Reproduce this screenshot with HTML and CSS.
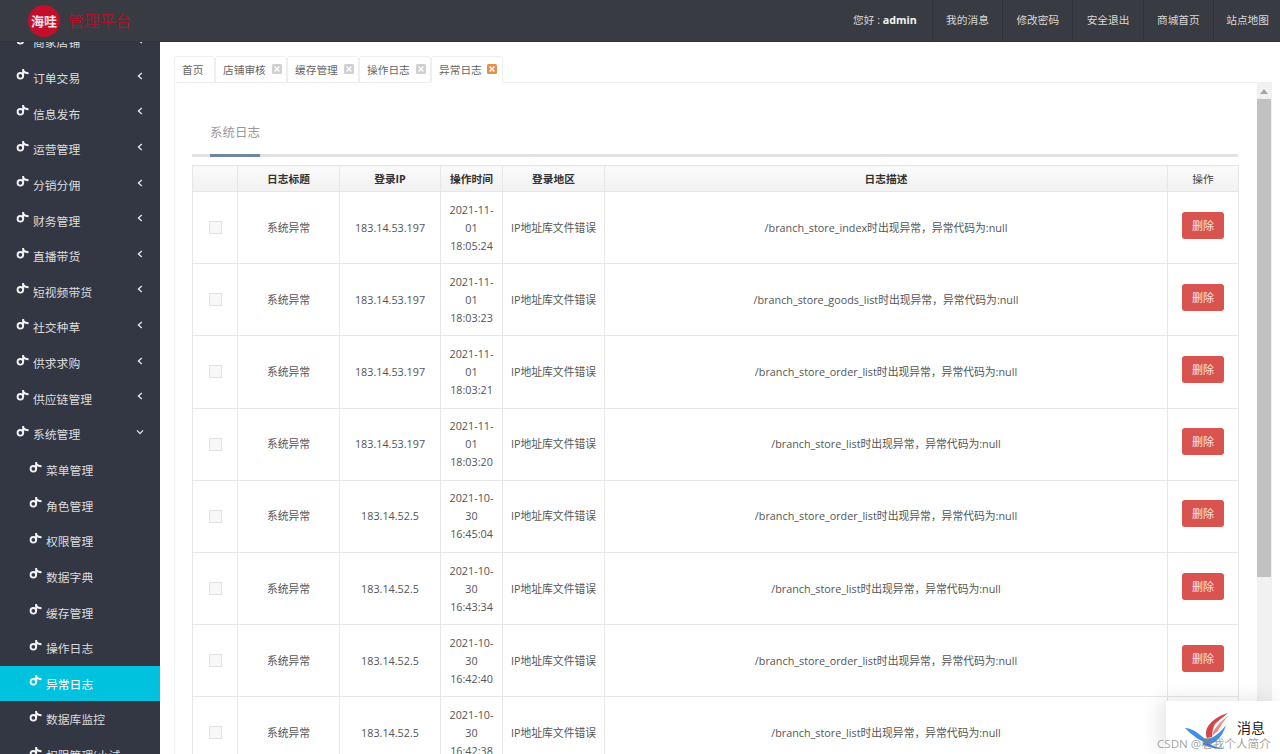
FILE: index.html
```html
<!DOCTYPE html>
<html lang="zh">
<head>
<meta charset="utf-8">
<title>管理平台</title>
<link rel="stylesheet" href="styles.css">
</head>
<body>
<svg class="defs" width="0" height="0">
  <symbol id="ico" viewBox="0 0 14 14">
    <circle cx="4.7" cy="8.4" r="3" fill="none" stroke="currentColor" stroke-width="2"/>
    <path d="M7.7 1V8.4M7.7 3C9 5 11 5.6 13.5 5.6" fill="none" stroke="currentColor" stroke-width="2.1"/>
  </symbol>
  <symbol id="left" viewBox="0 0 8 8"><path d="M5.8 1L2.4 4l3.4 3" fill="none" stroke="currentColor" stroke-width="1.3"/></symbol>
  <symbol id="down" viewBox="0 0 8 8"><path d="M1 2.4L4 5.6l3-3.2" fill="none" stroke="currentColor" stroke-width="1.3"/></symbol>
  <symbol id="close" viewBox="0 0 10 10"><rect width="10" height="10" rx="1.5" fill="currentColor"/><path d="M2.6 2.6l4.8 4.8M7.4 2.6L2.6 7.4" stroke="#fff" stroke-width="1.4"/></symbol>
</svg>

<header class="top">
  <div class="brand">
    <span class="badge">海哇</span>
    <span class="brand-name">管理平台</span>
  </div>
  <nav class="top-nav">
    <a class="top-link hello">您好 : <b>admin</b></a>
    <a class="top-link">我的消息</a>
    <a class="top-link">修改密码</a>
    <a class="top-link">安全退出</a>
    <a class="top-link">商城首页</a>
    <a class="top-link last">站点地图</a>
  </nav>
</header>

<div class="frame">
  <aside class="side">
    <ul class="menu">
      <li class="item"><svg class="ico"><use href="#ico"/></svg><span>商家店铺</span><svg class="arrow"><use href="#left"/></svg></li>
      <li class="item"><svg class="ico"><use href="#ico"/></svg><span>订单交易</span><svg class="arrow"><use href="#left"/></svg></li>
      <li class="item"><svg class="ico"><use href="#ico"/></svg><span>信息发布</span><svg class="arrow"><use href="#left"/></svg></li>
      <li class="item"><svg class="ico"><use href="#ico"/></svg><span>运营管理</span><svg class="arrow"><use href="#left"/></svg></li>
      <li class="item"><svg class="ico"><use href="#ico"/></svg><span>分销分佣</span><svg class="arrow"><use href="#left"/></svg></li>
      <li class="item"><svg class="ico"><use href="#ico"/></svg><span>财务管理</span><svg class="arrow"><use href="#left"/></svg></li>
      <li class="item"><svg class="ico"><use href="#ico"/></svg><span>直播带货</span><svg class="arrow"><use href="#left"/></svg></li>
      <li class="item"><svg class="ico"><use href="#ico"/></svg><span>短视频带货</span><svg class="arrow"><use href="#left"/></svg></li>
      <li class="item"><svg class="ico"><use href="#ico"/></svg><span>社交种草</span><svg class="arrow"><use href="#left"/></svg></li>
      <li class="item"><svg class="ico"><use href="#ico"/></svg><span>供求求购</span><svg class="arrow"><use href="#left"/></svg></li>
      <li class="item"><svg class="ico"><use href="#ico"/></svg><span>供应链管理</span><svg class="arrow"><use href="#left"/></svg></li>
      <li class="item"><svg class="ico"><use href="#ico"/></svg><span>系统管理</span><svg class="arrow"><use href="#down"/></svg></li>
      <li class="item sub"><svg class="ico"><use href="#ico"/></svg><span>菜单管理</span></li>
      <li class="item sub"><svg class="ico"><use href="#ico"/></svg><span>角色管理</span></li>
      <li class="item sub"><svg class="ico"><use href="#ico"/></svg><span>权限管理</span></li>
      <li class="item sub"><svg class="ico"><use href="#ico"/></svg><span>数据字典</span></li>
      <li class="item sub"><svg class="ico"><use href="#ico"/></svg><span>缓存管理</span></li>
      <li class="item sub"><svg class="ico"><use href="#ico"/></svg><span>操作日志</span></li>
      <li class="item sub active"><svg class="ico"><use href="#ico"/></svg><span>异常日志</span></li>
      <li class="item sub"><svg class="ico"><use href="#ico"/></svg><span>数据库监控</span></li>
      <li class="item sub"><svg class="ico"><use href="#ico"/></svg><span>权限管理(小试</span></li>
    </ul>
  </aside>

  <main class="main">
    <div class="tabs">
      <div class="tab home">首页</div>
      <div class="tab">店铺审核<svg class="x"><use href="#close"/></svg></div>
      <div class="tab">缓存管理<svg class="x"><use href="#close"/></svg></div>
      <div class="tab">操作日志<svg class="x"><use href="#close"/></svg></div>
      <div class="tab current">异常日志<svg class="x"><use href="#close"/></svg></div>
    </div>
    <section class="panel">
      <div class="title-bar"><span class="title">系统日志</span></div>
      <table class="grid">
        <colgroup>
          <col class="c1"><col class="c2"><col class="c3"><col class="c4"><col class="c5"><col class="c6"><col class="c7">
        </colgroup>
        <thead>
          <tr><th></th><th>日志标题</th><th>登录IP</th><th>操作时间</th><th>登录地区</th><th>日志描述</th><th class="plain">操作</th></tr>
        </thead>
        <tbody>
          <tr><td><i class="check"></i></td><td>系统异常</td><td>183.14.53.197</td><td>2021-11-<br>01<br>18:05:24</td><td>IP地址库文件错误</td><td>/branch_store_index时出现异常，异常代码为:null</td><td><a class="del">删除</a></td></tr>
          <tr><td><i class="check"></i></td><td>系统异常</td><td>183.14.53.197</td><td>2021-11-<br>01<br>18:03:23</td><td>IP地址库文件错误</td><td>/branch_store_goods_list时出现异常，异常代码为:null</td><td><a class="del">删除</a></td></tr>
          <tr><td><i class="check"></i></td><td>系统异常</td><td>183.14.53.197</td><td>2021-11-<br>01<br>18:03:21</td><td>IP地址库文件错误</td><td>/branch_store_order_list时出现异常，异常代码为:null</td><td><a class="del">删除</a></td></tr>
          <tr><td><i class="check"></i></td><td>系统异常</td><td>183.14.53.197</td><td>2021-11-<br>01<br>18:03:20</td><td>IP地址库文件错误</td><td>/branch_store_list时出现异常，异常代码为:null</td><td><a class="del">删除</a></td></tr>
          <tr><td><i class="check"></i></td><td>系统异常</td><td>183.14.52.5</td><td>2021-10-<br>30<br>16:45:04</td><td>IP地址库文件错误</td><td>/branch_store_order_list时出现异常，异常代码为:null</td><td><a class="del">删除</a></td></tr>
          <tr><td><i class="check"></i></td><td>系统异常</td><td>183.14.52.5</td><td>2021-10-<br>30<br>16:43:34</td><td>IP地址库文件错误</td><td>/branch_store_list时出现异常，异常代码为:null</td><td><a class="del">删除</a></td></tr>
          <tr><td><i class="check"></i></td><td>系统异常</td><td>183.14.52.5</td><td>2021-10-<br>30<br>16:42:40</td><td>IP地址库文件错误</td><td>/branch_store_order_list时出现异常，异常代码为:null</td><td><a class="del">删除</a></td></tr>
          <tr><td><i class="check"></i></td><td>系统异常</td><td>183.14.52.5</td><td>2021-10-<br>30<br>16:42:38</td><td>IP地址库文件错误</td><td>/branch_store_list时出现异常，异常代码为:null</td><td><a class="del">删除</a></td></tr>
        </tbody>
      </table>
      <div class="scrollbar"><span class="scroll-up"></span><span class="thumb"></span></div>
    </section>
  </main>
</div>

<div class="msg">
  <svg class="bird" viewBox="0 0 44 36">
    <path d="M22 25C18 15 27 5 43 0C37 5 33 8 30 11C28 15 27 19 27 24Z" fill="#d2484a"/>
    <path d="M27 23C29 15 34 10 43 3C38 9 35 13 33 18Z" fill="#e88a8c"/>
    <path d="M0 15C7 15 13 20 20 26C28 26 35 20 41 12C38 22 32 29 26 31C17 30 8 23 0 15Z" fill="#3d8ee8"/>
    <path d="M20 29C26 31 30 35 40 36C30 36 24 34 17 31Z" fill="#2f7fdc"/>
  </svg>
  <span class="msg-text">消息</span>
</div>
<div class="mark">CSDN @看我个人简介</div>
</body>
</html>
```
FILE: styles.css
```css
* { box-sizing: border-box; }
html, body { margin: 0; height: 754px; overflow: hidden; }
body {
  position: relative;
  font-family: "Open Sans", "Noto Sans CJK SC", sans-serif;
  font-size: 10.7px;
  color: #555;
  background: #fff;
  display: flex;
  flex-direction: column;
}
.defs { position: absolute; }

.top {
  height: 42px;
  flex: none;
  background: #383c42;
  display: flex;
  justify-content: space-between;
  position: relative;
  z-index: 2;
  border-bottom: 1px solid #30343a;
}
.brand { display: flex; align-items: center; padding-left: 28px; }
.badge {
  width: 32px; height: 32px;
  border-radius: 50%;
  background: #c40f2c;
  color: #f6e6e8;
  font-weight: 700;
  font-size: 13px;
  line-height: 32px;
  text-align: center;
  white-space: nowrap;
}
.brand-name { margin-left: 8px; font-size: 15.8px; color: #a5162d; }
.top-nav { display: flex; }
.top-link {
  width: 70.3px;
  line-height: 40px;
  text-align: center;
  color: #d8d8d8;
  border-left: 1px solid #2f3338;
}
.top-link.hello { width: auto; padding: 0 15px 0 14px; border-left: 0; }
.top-link.hello b { color: #f2f2f2; }
.top-link.last { width: 67px; padding-right: 11px; text-align: right; }

.frame { flex: 1; display: flex; min-height: 0; }

.side { width: 160px; flex: none; background: #333744; overflow: hidden; }
.menu { list-style: none; margin: -18px 0 0; padding: 0; }
.item {
  height: 35.65px;
  display: flex;
  align-items: center;
  padding-left: 16px;
  font-size: 11.8px;
  color: #dcdcdc;
  position: relative;
}
.ico { width: 13px; height: 13px; color: #f4f4f4; margin-right: 4px; margin-top: -5px; flex: none; }
.arrow { position: absolute; left: 136px; top: 12px; width: 8px; height: 8px; color: #e8e8e8; }
.sub { padding-left: 29px; }
.active { background: #00c1de; color: #fff; }

.main { flex: 1; min-width: 0; padding: 14px 8px 0 14px; display: flex; flex-direction: column; }
.tabs { display: flex; height: 27px; flex: none; position: relative; z-index: 1; }
.tab {
  width: 72px;
  height: 27px;
  display: flex;
  align-items: center;
  padding: 0 0 0 7px;
  color: #666;
  background: #fff;
  border: 1px solid #efefef;
  border-radius: 3px 3px 0 0;
  white-space: nowrap;
}
.tab.home { width: 41px; }
.tab.current { border-bottom-color: #fff; }
.x { width: 10px; height: 10px; margin: -2px 0 0 6px; color: #cfcfcf; }
.current .x { color: #e58f4c; margin-left: 5px; }

.panel {
  flex: 1;
  margin-top: -1px;
  position: relative;
  overflow: hidden;
  border: 1px solid #f0f0f0;
  border-bottom: 0;
  padding: 0 33px 0 17px;
}
.title-bar { height: 74px; border-bottom: 3px solid #e2e2e2; padding: 35px 0 0 18px; }
.title {
  display: inline-block;
  height: 39px;
  width: 50px;
  font-size: 12.5px;
  line-height: 30px;
  color: #999;
  border-bottom: 3px solid #6f87a5;
  white-space: nowrap;
}
.grid { margin-top: 8px; width: 1046px; table-layout: fixed; border-collapse: collapse; }
.c1 { width: 45px; } .c2 { width: 102px; } .c3 { width: 101px; } .c4 { width: 62px; }
.c5 { width: 102px; } .c6 { width: 563px; } .c7 { width: 71px; }
.grid th, .grid td { border: 1px solid #e7e7e7; text-align: center; padding: 0; }
.grid th {
  height: 26px;
  font-weight: 700;
  color: #333;
  background: linear-gradient(#fbfbfb, #f1f1f1);
}
.grid th.plain { font-weight: 400; color: #444; }
.grid td { height: 72.2px; line-height: 18px; color: #555; font-size: 10.8px; }
.check {
  display: block;
  width: 13px; height: 13px;
  margin: 0 auto;
  background: #f8f8f8;
  border: 1px solid #e3e3e3;
}
.del {
  display: inline-block;
  width: 42px;
  height: 27px;
  line-height: 27px;
  margin-bottom: 5px;
  border-radius: 3px;
  background: #d9534f;
  color: #fbe3e2;
  font-size: 11px;
}
.scrollbar {
  position: absolute;
  left: 1082px; top: 0; bottom: 0;
  width: 14px;
  background: #f1f1f1;
}
.scroll-up {
  display: block;
  width: 0; height: 0;
  margin: 6px auto 0;
  border: 4px solid transparent;
  border-top: 0;
  border-bottom: 5px solid #a6a6a6;
}
.thumb { display: block; height: 478px; margin-top: 5px; background: #c1c1c1; }

.msg {
  position: absolute;
  left: 1166px; top: 701px;
  width: 114px; height: 53px;
  background: #fff;
  box-shadow: -6px -2px 20px rgba(0, 0, 0, .1);
  z-index: 3;
}
.bird { position: absolute; left: 19px; top: 12px; width: 44px; height: 36px; }
.msg-text { position: absolute; left: 71px; top: 17px; font-size: 14px; line-height: 20px; color: #222; }
.mark {
  position: absolute;
  left: 1157px; top: 736px;
  font-size: 11.6px;
  line-height: 15px;
  color: rgba(130, 130, 130, .75);
  white-space: nowrap;
  z-index: 4;
}
```
